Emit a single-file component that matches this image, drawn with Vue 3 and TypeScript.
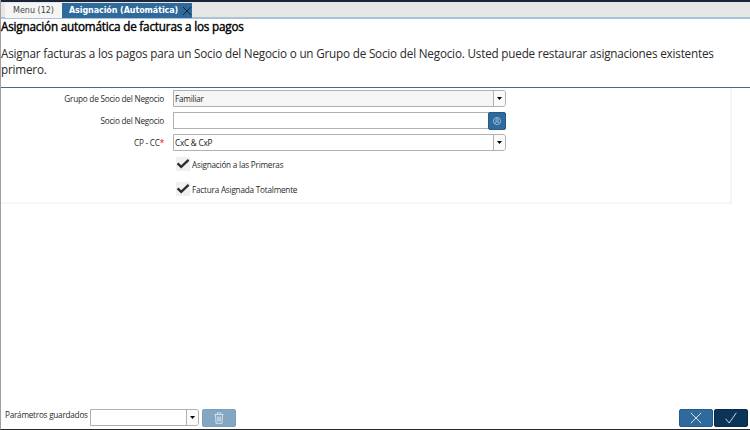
<script setup lang="ts">
import { ref } from 'vue'

interface Option {
  label: string
  checked: boolean
}

const group = ref('Familiar')
const partner = ref('')
const account = ref('CxC & CxP')
const options = ref<Option[]>([
  { label: 'Asignación a las Primeras', checked: true },
  { label: 'Factura Asignada Totalmente', checked: true },
])
</script>

<template>
  <div class="window">
    <nav class="tabs">
      <div class="tab menu"><span>Menu (12)</span></div>
      <div class="tab active">
        <span>Asignación (Automática)</span>
        <svg class="close" viewBox="0 0 10 10"><path d="M1 1L9 9M9 1L1 9" /></svg>
      </div>
    </nav>

    <header class="intro">
      <h1><span>Asignación automática de facturas a los pagos</span></h1>
      <p>
        <span class="line">Asignar facturas a los pagos para un Socio del Negocio o un Grupo de Socio del Negocio. Usted puede restaurar asignaciones existentes</span>
        <span class="line">primero.</span>
      </p>
    </header>

    <main class="form">
      <div class="row">
        <label><span>Grupo de Socio del Negocio</span></label>
        <div class="combo disabled">
          <span class="value">{{ group }}</span>
          <span class="arrow"><svg viewBox="0 0 5 3"><path d="M0 0H5L2.5 3Z" /></svg></span>
        </div>
      </div>
      <div class="row">
        <label><span>Socio del Negocio</span></label>
        <div class="combo search">
          <span class="value">{{ partner }}</span>
          <button class="lookup" type="button">
            <svg viewBox="0 0 10 10"><circle cx="5" cy="5" r="3.6" /><circle cx="5" cy="4" r="1.3" /><path d="M2.8 7.6V6.5Q5 4.9 7.2 6.5V7.6" /></svg>
          </button>
        </div>
      </div>
      <div class="row">
        <label><span>CP - CC</span><i>*</i></label>
        <div class="combo">
          <span class="value dark">{{ account }}</span>
          <span class="arrow"><svg viewBox="0 0 5 3"><path d="M0 0H5L2.5 3Z" /></svg></span>
        </div>
      </div>
      <div v-for="option in options" :key="option.label" class="check">
        <span class="box">
          <svg v-if="option.checked" viewBox="0 0 14 14"><path d="M1.6 6.4L5.2 9.8L12.6 2.8" /></svg>
        </span>
        <span class="text">{{ option.label }}</span>
      </div>
    </main>

    <footer class="footer">
      <span class="saved">Parámetros guardados</span>
      <div class="combo small">
        <span class="value"></span>
        <span class="arrow"><svg viewBox="0 0 5 3"><path d="M0 0H5L2.5 3Z" /></svg></span>
      </div>
      <button class="btn trash" type="button">
        <svg viewBox="0 0 10 12"><path d="M.5 2.5H9.5M3.2 2.3V.8H6.8V2.3M1.5 2.8L2 11.3H8L8.5 2.8M3.7 4.5V9.5M5 4.5V9.5M6.3 4.5V9.5" /></svg>
      </button>
      <span class="spacer"></span>
      <button class="btn cancel" type="button">
        <svg viewBox="0 0 12 12"><path d="M.8 .8L11.2 11.2M11.2 .8L.8 11.2" /></svg>
      </button>
      <button class="btn ok" type="button">
        <svg viewBox="0 0 12 12"><path d="M.7 6.8L4.2 11L11.3 .8" /></svg>
      </button>
    </footer>
  </div>
</template>

<style>
body { background: #fff; overflow: hidden; }
</style>

<style scoped>
* { box-sizing: border-box; }
.window {
  width: 750px;
  height: 430px;
  display: flex;
  flex-direction: column;
  background: #fff;
  border-left: 1px solid #a0a0a0;
  border-bottom: 1px solid #26282b;
  font-family: "Open Sans", sans-serif;
  color: #2a2a2a;
  white-space: nowrap;
}
.tabs {
  display: flex;
  height: 19px;
  padding: 1px 0 0 4px;
  background: #e6e6e6;
  border-top: 2px solid #1c2439;
  border-bottom: 2px solid #a9c3d8;
  flex: none;
}
.tab {
  display: flex;
  align-items: center;
  height: 15px;
  padding-top: 1px;
  font: 8px/14px "DejaVu Sans", sans-serif;
}
.menu { width: 57px; padding-left: 8px; background: #f5f5f5; color: #444; letter-spacing: 0; }
.active { width: 130px; padding-left: 7px; background: #2f6a9c; color: #fff; font-weight: bold; letter-spacing: -0.08px; }
.active > span { width: 113px; }
.close { width: 10px; height: 10px; fill: none; stroke: #10243a; stroke-width: 1; flex: none; }
.intro { height: 69px; border-bottom: 1px solid #3d6e96; flex: none; }
h1 { margin: 0; font-size: 11.7px; line-height: 14px; font-weight: 400; color: #000; -webkit-text-stroke: .4px #000; letter-spacing: -0.18px; }
p { margin: 12px 0 0; font-size: 11.7px; line-height: 16px; letter-spacing: -0.19px; }
.line { display: block; }
.form {
  width: 731px;
  height: 116px;
  padding-top: 2px;
  border-right: 2px solid #f6f6f6;
  border-bottom: 2px solid #f6f6f6;
  font-size: 8.2px;
  letter-spacing: -0.22px;
  flex: none;
}
.row { display: flex; align-items: flex-start; height: 18px; margin-bottom: 4px; }
label { width: 163px; margin-right: 9px; line-height: 18px; text-align: right; }
label i { color: #f00000; font-style: normal; }
.combo {
  display: flex;
  width: 333px;
  height: 17px;
  border: 1px solid #b0b0b0;
  border-radius: 0 3px 3px 0;
  background: #fff;
}
.disabled { background: #f5f5f5; }
.value { flex: 1; padding-left: 1px; line-height: 16px; }
.dark { color: #111; }
.arrow { display: flex; width: 12px; align-items: center; justify-content: center; border-left: 1px solid #b0b0b0; background: #fafafa; border-radius: 0 2px 2px 0; }
.arrow svg { width: 5px; height: 3px; fill: #000; }
.search { border-right: 0; }
.lookup {
  display: flex;
  align-items: center;
  justify-content: center;
  width: 18px;
  height: 18px;
  margin-top: -1px;
  padding: 0;
  border: 1px solid #245b89;
  border-radius: 2px;
  background: #2f6a9c;
}
.lookup svg { width: 10px; height: 10px; fill: none; stroke: #a9c5dc; stroke-width: .8; }
.check { display: flex; align-items: center; height: 14px; margin: 5px 0 0 175px; }
.check + .check { margin-top: 11px; }
.box { width: 14px; height: 14px; margin-right: 2px; background: #f0f0f0; flex: none; }
.box svg { display: block; width: 14px; height: 14px; fill: none; stroke: #2b2b2b; stroke-width: 2.3; }
.footer { display: flex; align-items: flex-start; height: 20px; margin-top: auto; padding-right: 2px; font-size: 8.2px; letter-spacing: -0.24px; flex: none; }
.saved { width: 85px; margin-left: 4px; line-height: 11px; }
.small { width: 109px; margin-right: 3px; }
.btn { display: flex; align-items: center; justify-content: center; width: 34px; height: 18px; padding: 0; border: 1px solid #245b89; border-radius: 2px; background: #2f6a9c; }
.btn svg { width: 12px; height: 12px; fill: none; stroke: #fff; stroke-width: .8; }
.trash { background: #83a6c3; border-color: #7c9fbd; }
.trash svg { width: 10px; stroke: #e3edf4; }
.cancel { margin-right: 1px; }
.ok { background: #0a3558; border-color: #082b49; }
.spacer { flex: 1; }
</style>
